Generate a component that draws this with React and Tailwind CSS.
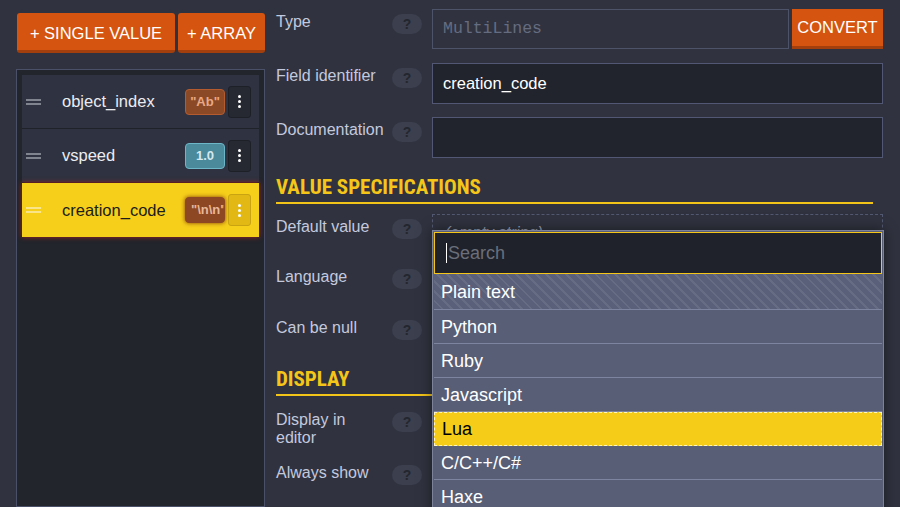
import React from "react"

const sans = { fontFamily: '"Liberation Sans", Arial, sans-serif' }

const Help = () => (
  <span className="flex h-[20px] w-[30px] shrink-0 items-center justify-center rounded-full bg-[#3b3f4e] text-[14px] font-bold leading-none text-[#23262e]">
    ?
  </span>
)

const Field = ({ label, className = "", children }) => (
  <div className={"flex items-start " + className}>
    <div className="w-[116px] shrink-0 pt-[4px] pr-2 text-[16px] leading-[18px] text-[#c4c9de]">{label}</div>
    <div className="mt-[5px]">
      <Help />
    </div>
    <div className="ml-[10px] flex min-w-0 flex-1">{children}</div>
  </div>
)

const Heading = ({ children, className = "" }) => (
  <div
    className={
      "border-b-2 border-[#f2c319] pb-[2px] text-[21px] leading-[26px] font-bold uppercase text-[#f5c518] " + className
    }
    style={{ fontFamily: '"Liberation Sans Narrow", "Roboto Condensed", "DejaVu Sans Condensed", Roboto, sans-serif' }}
  >
    {children}
  </div>
)

const Handle = ({ light }) => (
  <div className="flex w-[15px] flex-col gap-[2px]">
    <span className={"h-[2px] w-full " + (light ? "bg-[#f9e48a]" : "bg-[#80848f]")} />
    <span className={"h-[2px] w-full " + (light ? "bg-[#f9e48a]" : "bg-[#80848f]")} />
  </div>
)

const Kebab = ({ active }) => (
  <div
    className={
      "ml-[3px] flex h-[32px] w-[23px] flex-col items-center justify-center gap-[2px] rounded-[3px] border " +
      (active ? "border-[#c9a312] bg-[#e2b914]" : "border-[#1d2027] bg-[#262932]")
    }
  >
    <span className="h-[3px] w-[3px] rounded-full bg-white" />
    <span className="h-[3px] w-[3px] rounded-full bg-white" />
    <span className="h-[3px] w-[3px] rounded-full bg-white" />
  </div>
)

const badgeStyles = {
  string: "border-[#b45c30] bg-[#8b4a25] text-[#e8a888] justify-center",
  number: "border-[#6cb6c8] bg-[#4b8a9b] text-[#d2e9ef] justify-center",
  code: "border-[#8d4722] bg-[#8d4722] text-[#e8b89a] justify-start pl-[5px] shadow-[0_0_4px_rgba(120,40,10,0.9)]",
}

const Badge = ({ kind, text }) => (
  <div
    className={
      "flex h-[26px] w-[40px] items-center overflow-hidden whitespace-nowrap rounded-[4px] border text-[13px] font-bold " +
      badgeStyles[kind]
    }
  >
    {text}
  </div>
)

const items = [
  { name: "object_index", kind: "string", badge: '"Ab"' },
  { name: "vspeed", kind: "number", badge: "1.0" },
  { name: "creation_code", kind: "code", badge: '"\\n\\n"', active: true },
]

const languages = ["Plain text", "Python", "Ruby", "Javascript", "Lua", "C/C++/C#", "Haxe"]

export default function App() {
  return (
    <div className="flex h-screen w-full overflow-hidden bg-[#30333f]" style={sans}>
      {/* left column */}
      <div className="ml-[16px] flex w-[249px] shrink-0 flex-col">
        <div className="mt-[13px] ml-[1px] flex gap-[3px]">
          <button className="h-[40px] w-[158px] rounded-[3px] border-b-[3px] border-[#a33f0c] bg-[#d55410] pt-[4px] text-[16.5px] text-white">
            + SINGLE VALUE
          </button>
          <button className="h-[40px] w-[87px] rounded-[3px] border-b-[3px] border-[#a33f0c] bg-[#d55410] pt-[4px] text-[16.5px] text-white">
            + ARRAY
          </button>
        </div>
        <div className="mt-[16px] flex flex-1 flex-col border border-[#4a5068] bg-[#22252c] p-[5px]">
          {items.map((it) => (
            <div
              key={it.name}
              className={
                "flex h-[54px] shrink-0 items-center pr-[8px] pl-[4px] " +
                (it.active
                  ? "bg-[#f6cf1a] shadow-[0_0_5px_rgba(190,30,30,0.85)]"
                  : "border-b border-[#1f2229] bg-[#2f3240]")
              }
            >
              <Handle light={it.active} />
              <span className={"ml-[21px] flex-1 text-[16.5px] " + (it.active ? "text-[#1c1c1c]" : "text-[#ececf0]")}>
                {it.name}
              </span>
              <Badge kind={it.kind} text={it.badge} />
              <Kebab active={it.active} />
            </div>
          ))}
        </div>
      </div>

      {/* right column */}
      <div className="ml-[11px] flex w-[607px] shrink-0 flex-col pt-[9px]">
        <Field label="Type">
          <div className="flex h-[40px] flex-1 items-center border border-[#4d5369] px-[10px] text-[16.5px] text-[#666c80]" style={{ fontFamily: '"Liberation Mono", monospace' }}>
            MultiLines
          </div>
          <button className="ml-[3px] h-[40px] w-[91px] border-b-[3px] border-[#a33f0c] bg-[#d55410] text-[16.5px] text-white">
            CONVERT
          </button>
        </Field>

        <Field label="Field identifier" className="mt-[14px]">
          <div className="flex h-[41px] flex-1 items-center border border-[#525873] bg-[#21242c] px-[10px] text-[16.5px] text-white">
            creation_code
          </div>
        </Field>

        <Field label="Documentation" className="mt-[13px]">
          <div className="h-[41px] flex-1 border border-[#525873] bg-[#21242c]" />
        </Field>

        <Heading className="mt-[16px] mr-[10px]">Value specifications</Heading>

        <Field label="Default value" className="mt-[10px]">
          <div className="relative h-[40px] flex-1 border border-dashed border-[#535970] px-[12px] pt-[8px] text-[16px] leading-[20px] italic text-[#9aa0b5]">
            (empty string)
            {/* open language dropdown */}
            <div className="absolute top-[15px] -right-[2px] -left-px z-10 border border-[#7c8299] bg-[#585e75] p-px shadow-[0_0_12px_rgba(0,0,0,0.5)] not-italic">
              <div className="flex h-[42px] items-center border border-[#f5c518] bg-[#1f222a] pl-[11px] text-[18px] text-[#6b6f7a]">
                <span className="mr-px h-[20px] w-px bg-white" />
                Search
              </div>
              {languages.map((lang, i) => {
                const active = lang === "Lua"
                return (
                  <div
                    key={lang}
                    className={
                      "flex items-center pl-[7px] text-[18px] " +
                      (i === 0 ? "h-[36px] " : "h-[34px] ") +
                      (active
                        ? "border border-dashed border-[#fff4c4] bg-[#f5cd18] pl-[6px] text-black"
                        : "border-b border-[#7d84a0] text-white ") +
                      (i === 0
                        ? " bg-[repeating-linear-gradient(45deg,#5a6079_0px,#5a6079_5px,#666c84_5px,#666c84_7px)]"
                        : "")
                    }
                  >
                    {lang}
                  </div>
                )
              })}
            </div>
          </div>
        </Field>

        <Field label="Language" className="mt-[10px]">
          <div className="h-[40px] flex-1" />
        </Field>

        <Field label="Can be null" className="mt-[11px]">
          <div className="h-[40px] flex-1" />
        </Field>

        <Heading className="mt-[11px] mr-[10px]">Display</Heading>

        <Field label="Display in editor" className="mt-[11px]">
          <div className="h-[40px] flex-1" />
        </Field>

        <Field label="Always show" className="mt-[13px]">
          <div className="h-[40px] flex-1" />
        </Field>
      </div>
    </div>
  )
}
